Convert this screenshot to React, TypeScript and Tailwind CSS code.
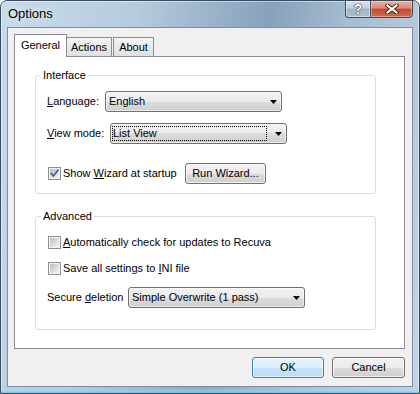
import React from "react";

function Arrow() {
  return (
    <svg width="7" height="4" viewBox="0 0 7 4" className="shrink-0">
      <path d="M0 0h7L3.5 4z" fill="#000" />
    </svg>
  );
}

function Combo({ cls, text, focus }: { cls: string; text: string; focus?: boolean }) {
  return (
    <div
      className={`flex h-[21px] items-center justify-between rounded-[3px] border border-[#707070] bg-[linear-gradient(to_bottom,#f2f2f2_0%,#ebebeb_50%,#dddddd_50%,#cfcfcf_100%)] shadow-[inset_0_0_0_1px_rgba(255,255,255,0.55)] pr-[4px] ${focus ? "pl-[1px]" : "pl-[3px]"} ${cls}`}
    >
      {focus ? (
        <span className="flex h-[15px] w-[155px] items-center border border-dotted border-black">{text}</span>
      ) : (
        <span>{text}</span>
      )}
      <Arrow />
    </div>
  );
}

function Btn({ children, cls, def }: { children: React.ReactNode; cls: string; def?: boolean }) {
  return (
    <button
      type="button"
      className={`flex h-[21px] items-center justify-center rounded-[3px] border ${
        def
          ? "border-[#3c7fb1] bg-[linear-gradient(to_bottom,#e8f5fd_0%,#d9eefb_50%,#c6e4f8_50%,#b9dcf5_100%)] shadow-[inset_0_0_0_1px_rgba(255,255,255,0.6)]"
          : "border-[#707070] bg-[linear-gradient(to_bottom,#f2f2f2_0%,#ebebeb_50%,#dddddd_50%,#cfcfcf_100%)] shadow-[inset_0_0_0_1px_rgba(255,255,255,0.7)]"
      } ${cls}`}
    >
      {children}
    </button>
  );
}

function CheckBox({ checked }: { checked?: boolean }) {
  return (
    <svg width="13" height="13" viewBox="0 0 13 13" className="shrink-0">
      <defs>
        <linearGradient id="cbfill" x1="0" y1="0" x2="1" y2="1">
          <stop offset="0" stopColor="#b9bec6" />
          <stop offset="1" stopColor="#f4f4f5" />
        </linearGradient>
      </defs>
      <rect x="0.5" y="0.5" width="12" height="12" fill="#f5f5f5" stroke="#8f8f8f" />
      <rect x="2" y="2" width="9" height="9" fill="url(#cbfill)" />
      {checked && (
        <path d="M3.2 6.4 L5.4 9 L9.9 3.2" stroke="#4a5f97" strokeWidth="1.7" fill="none" strokeLinecap="round" strokeLinejoin="round" />
      )}
    </svg>
  );
}

export default function App() {
  return (
    <div className="h-[394px] w-[420px] font-['Liberation_Sans',Arial,sans-serif] text-[11px] leading-[13px] text-black">
      <div className="flex h-full w-full flex-col rounded-t-[7px] border border-[#3c4d5e] bg-[linear-gradient(100deg,#c9dbea_0%,#b6cbdd_28%,#97b0c8_46%,#87a2bc_56%,#a6bcd1_72%,#c3d5e5_100%)] shadow-[inset_0_0_0_1px_rgba(255,255,255,0.45)]">
        {/* title bar */}
        <div className="flex h-[26px] items-start">
          <div className="pl-[7px] pt-[5px] text-[13px] leading-[16px] [text-shadow:0_0_6px_rgba(255,255,255,0.9)]">Options</div>
          <div className="-mt-px ml-auto mr-[6px] flex h-[18px]">
            <div className="flex w-[25px] items-center justify-center rounded-bl-[4px] border border-r-0 border-[#3b4a5a] bg-[linear-gradient(to_bottom,#d8e3ee_0%,#c0cedc_45%,#a2b5c8_50%,#aec1d3_100%)] shadow-[inset_0_0_0_1px_rgba(255,255,255,0.45)]">
              <span className="text-[14px] font-bold leading-none text-white [text-shadow:0_0_1px_#1e2a36,0_0_1px_#1e2a36,0_0_1px_#1e2a36]">?</span>
            </div>
            <div className="flex w-[43px] items-center justify-center rounded-br-[4px] border border-[#3b4a5a] bg-[linear-gradient(to_bottom,#e9b2a2_0%,#da8a74_45%,#c24a30_50%,#d26a4e_100%)] shadow-[inset_0_0_0_1px_rgba(255,255,255,0.35)]">
              <svg width="14" height="10" viewBox="0 0 14 10">
                <path d="M2.5 1.5 L11.5 8.5 M11.5 1.5 L2.5 8.5" stroke="#3d1c15" strokeWidth="4" strokeLinecap="square" />
                <path d="M2.5 1.5 L11.5 8.5 M11.5 1.5 L2.5 8.5" stroke="#ffffff" strokeWidth="2.2" strokeLinecap="square" />
              </svg>
            </div>
          </div>
        </div>

        {/* client area */}
        <div className="mx-[6px] h-[360px] border border-[#7b8ea2] bg-[#f0f0f0] pl-[6px] pr-[7px] pt-[6px]">
          {/* tabs */}
          <div className="flex h-[22px] items-end">
            <div className="relative z-10 -mb-px flex h-[23px] w-[53px] items-center justify-center border-x border-t border-[#898c95] bg-white pb-[1px]">
              General
            </div>
            <div className="flex h-[19px] w-[45px] items-center justify-center border-r border-t border-[#898c95] bg-[linear-gradient(to_bottom,#f4f4f4,#e0e0e0)]">
              Actions
            </div>
            <div className="ml-px flex h-[19px] w-[41px] items-center justify-center border-x border-t border-[#898c95] bg-[linear-gradient(to_bottom,#f4f4f4,#e0e0e0)]">
              About
            </div>
          </div>

          {/* panel */}
          <div className="h-[293px] w-[391px] border border-[#898c95] bg-white">
            <fieldset className="ml-[20px] mt-[12px] h-[125px] w-[341px] rounded-[3px] border border-[#d5dfe5]">
              <legend className="ml-[5px] px-[2px] leading-[13px]">Interface</legend>
              <div className="mt-[9px] flex h-[21px] items-center pl-[11px]">
                <span className="w-[58px]">
                  <u>L</u>anguage:
                </span>
                <Combo cls="w-[177px]" text="English" />
              </div>
              <div className="mt-[11px] flex h-[21px] items-center pl-[11px]">
                <span className="w-[63px]">
                  <u>V</u>iew mode:
                </span>
                <Combo cls="w-[177px]" text="List View" focus />
              </div>
              <div className="mt-[19px] flex h-[21px] items-center pl-[12px]">
                <CheckBox checked />
                <span className="ml-[2px] w-[122px]">
                  Show <u>W</u>izard at startup
                </span>
                <Btn cls="w-[81px]">Run Wizard...</Btn>
              </div>
            </fieldset>

            <fieldset className="ml-[20px] mt-[16px] h-[120px] w-[341px] rounded-[3px] border border-[#d5dfe5]">
              <legend className="ml-[5px] px-[2px] leading-[13px]">Advanced</legend>
              <div className="mt-[13px] flex h-[13px] items-center pl-[12px]">
                <CheckBox />
                <span className="ml-[2px]">
                  <u>A</u>utomatically check for updates to Recuva
                </span>
              </div>
              <div className="mt-[13px] flex h-[13px] items-center pl-[12px]">
                <CheckBox />
                <span className="ml-[2px]">
                  Save all settings to <u>I</u>NI file
                </span>
              </div>
              <div className="mt-[12px] flex h-[21px] items-center pl-[11px]">
                <span className="w-[81px]">
                  Secure <u>d</u>eletion
                </span>
                <Combo cls="w-[177px]" text="Simple Overwrite (1 pass)" />
              </div>
            </fieldset>
          </div>

          {/* buttons */}
          <div className="mt-[8px] flex justify-end gap-[8px]">
            <Btn cls="w-[72px]" def>
              OK
            </Btn>
            <Btn cls="w-[73px]">Cancel</Btn>
          </div>
        </div>
        <div className="h-[6px] bg-[linear-gradient(to_bottom,rgba(255,255,255,0)_0%,rgba(160,214,240,0.6)_70%,rgba(70,185,235,0.8)_100%)]" />
      </div>
    </div>
  );
}
